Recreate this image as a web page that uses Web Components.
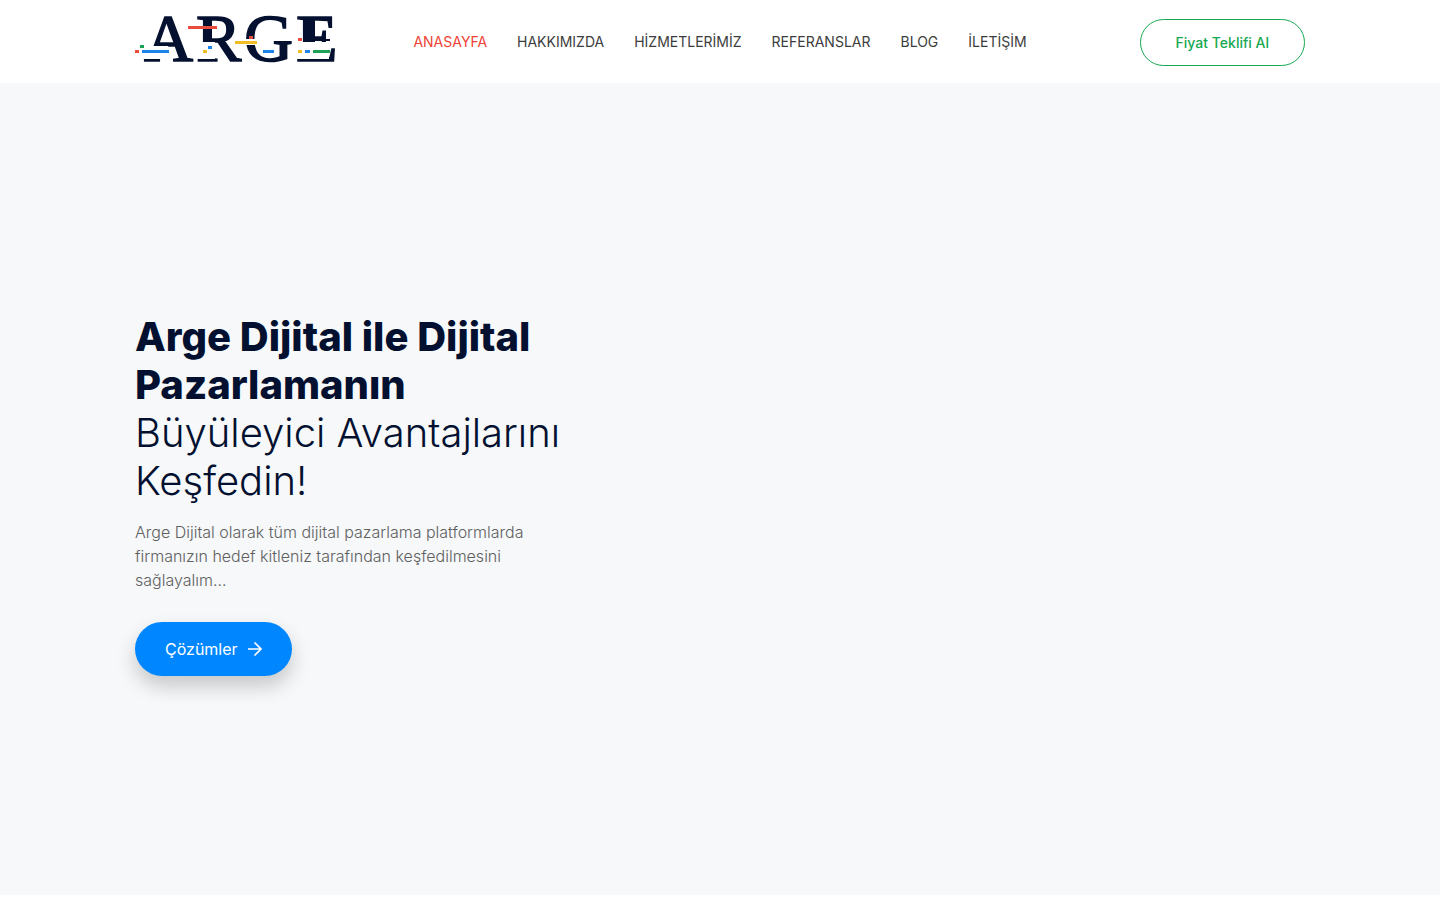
<!DOCTYPE html>
<html lang="tr">
<head>
<meta charset="utf-8">
<meta name="viewport" content="width=device-width, initial-scale=1">
<title>Arge Dijital</title>
<style>
  body { margin: 0; background: #fff; font-family: Inter, sans-serif; }
</style>
</head>
<body>
<arge-header></arge-header>
<main>
  <arge-hero>
    <strong slot="lead">Arge Dijital ile Dijital Pazarlamanın</strong>
    <span slot="rest">Büyüleyici Avantajlarını Keşfedin!</span>
    <span slot="text">Arge Dijital olarak tüm dijital pazarlama platformlarda firmanızın hedef kitleniz tarafından keşfedilmesini sağlayalım...</span>
    <arge-cta slot="action" href="#cozumler">Çözümler</arge-cta>
  </arge-hero>
</main>
<script>
const define = (name, html, setup) => {
  const tpl = document.createElement('template');
  tpl.innerHTML = html;
  customElements.define(name, class extends HTMLElement {
    constructor() {
      super();
      this.attachShadow({ mode: 'open' }).append(tpl.content.cloneNode(true));
    }
    connectedCallback() { if (setup) setup(this, this.shadowRoot); }
  });
};

define('arge-logo', `
<style>
  :host { display: block; }
  a { display: block; width: 202px; }
  svg { display: block; overflow: visible; }
  text { font: 400 68px "Liberation Serif", serif; fill: #03102f; stroke: #03102f; stroke-width: 1.5px; }
</style>
<a href="#" aria-label="Arge Dijital">
  <svg width="202" height="48" viewBox="0 0 202 48">
    <text x="9" y="46">A</text>
    <text x="61" y="46">R</text>
    <text x="109" y="46">G</text>
    <text x="161" y="46">E</text>
    <path fill="#fff" d="M5 31h28l5 13H5zM61 27h19v17H61zM108 24h14v6h-14zM160 27h34v17h-34z"/>
    <path fill="#03102f" d="M68 2h9v25h-9zM171 2h9v25h-9zM180 24h15v2h-15z"/>
    <path fill="#e94b3c" d="M0 35h4v3H0zM53 11h29v3H53zM114 21h4v3h-4zM163 23h4v3h-4z"/>
    <path fill="#1aa255" d="M5 30h4v3H5zM178 35h17v3h-17z"/>
    <path fill="#1b83ea" d="M7 35h27v3H7zM73 31h4v3h-4zM128 35h11v3h-11zM170 35h5v3h-5z"/>
    <path fill="#f0bd25" d="M68 35h4v3h-4zM100 26h22v3h-22zM163 35h4v3h-4z"/>
  </svg>
</a>`);

define('arge-nav-link', `
<style>
  :host { display: block; }
  a { display: block; font-size: 14px; line-height: 24px; color: #3c3c3c; text-decoration: none; white-space: nowrap; }
  :host([current]) a { color: #ee4235; }
</style>
<a><slot></slot></a>`, (el, root) => { root.querySelector('a').href = el.getAttribute('href'); });

define('arge-header', `
<style>
  :host { display: block; background: #fff; }
  .bar { box-sizing: border-box; max-width: 1200px; margin: 0 auto; padding: 15px 15px 17px; display: grid; grid-template-columns: 1fr auto 1fr; align-items: start; }
  nav { display: flex; gap: 30px; padding-top: 15px; }
  button { box-sizing: border-box; justify-self: end; margin: 4px 0 0; padding: 0 35px; height: 47px; border: 1px solid #16a951; border-radius: 24px; background: #fff; color: #16a951; font: 500 14px/24px Inter, sans-serif; }
</style>
<header class="bar">
  <arge-logo></arge-logo>
  <nav aria-label="Ana menü">
    <arge-nav-link href="#" current>ANASAYFA</arge-nav-link>
    <arge-nav-link href="#hakkimizda">HAKKIMIZDA</arge-nav-link>
    <arge-nav-link href="#hizmetlerimiz">HİZMETLERİMİZ</arge-nav-link>
    <arge-nav-link href="#referanslar">REFERANSLAR</arge-nav-link>
    <arge-nav-link href="#blog">BLOG</arge-nav-link>
    <arge-nav-link href="#iletisim">İLETİŞİM</arge-nav-link>
  </nav>
  <button type="button">Fiyat Teklifi Al</button>
</header>`);

define('arge-cta', `
<style>
  :host { display: inline-block; }
  a { display: flex; align-items: center; gap: 10px; padding: 15px 30px; border-radius: 27px; background: #0086ff; color: #fff; font-size: 16px; line-height: 24px; text-decoration: none; box-shadow: 0 10px 20px rgba(0, 0, 0, .2); }
  svg { display: block; }
</style>
<a><slot></slot><svg width="14" height="14" viewBox="0 0 14 14" fill="none" stroke="#fff" stroke-width="1.6" aria-hidden="true"><path d="M0 7h13M6.5 .5L13 7l-6.500 6.500"/></svg></a>`,
(el, root) => { root.querySelector('a').href = el.getAttribute('href'); });

define('arge-hero', `
<style>
  :host { display: block; background: #f6f8fa; }
  .wrap { box-sizing: border-box; max-width: 1200px; min-height: calc(100vh - 88px); margin: 0 auto; padding: 10px 15px 0; display: flex; align-items: center; }
  .copy { max-width: 440px; }
  h1 { margin: 0 0 15px; font-size: 40px; line-height: 48px; font-weight: 300; color: #03102f; }
  h1 slot { display: block; }
  ::slotted(strong) { font-weight: 800; }
  p { margin: 0 0 30px; font-size: 16px; line-height: 24px; font-weight: 300; color: #606060; }
</style>
<section class="wrap">
  <div class="copy">
    <h1><slot name="lead"></slot><slot name="rest"></slot></h1>
    <p><slot name="text"></slot></p>
    <slot name="action"></slot>
  </div>
</section>`);
</script>
</body>
</html>
